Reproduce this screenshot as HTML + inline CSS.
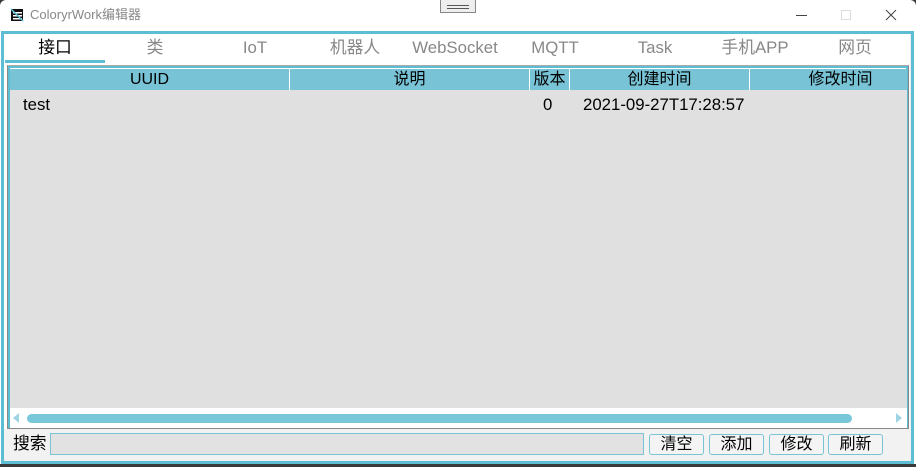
<!DOCTYPE html>
<html><head><meta charset="utf-8"><style>
*{margin:0;padding:0;box-sizing:border-box}
body{width:916px;height:467px;background:#3a3a3a;position:relative;overflow:hidden;font-family:"Liberation Sans","Noto Sans CJK SC",sans-serif}
.a{position:absolute}
.win{left:0;top:0;width:916px;height:464px;background:#fff;border-radius:6px 6px 0 0}
.title{left:30px;top:7px;font-size:13px;line-height:16px;color:#888}
.tab{top:38px;font-size:16.8px;line-height:20px;height:20px;color:#888;text-align:center;width:100px}
.hd{top:69px;height:21px;background:#78c3d6;font-size:16px;text-align:center;line-height:21px;color:#000;border-right:1px solid #fff}
.cell{top:95px;font-size:16.8px;line-height:20px}
.btn{top:434px;height:21px;border:1px solid #78c3d6;border-radius:3px;background:#f4f4f4;font-size:16px;line-height:19px;text-align:center}
</style></head><body>
<div class="a win"></div>
<svg class="a" style="left:10px;top:8px" width="14" height="14"><rect x="1" y="1" width="12" height="12" fill="#111"/><rect x="3" y="4" width="9" height="1.5" fill="#fff"/><rect x="3" y="7" width="9" height="1.5" fill="#fff"/><rect x="3" y="10" width="9" height="1.5" fill="#fff"/><line x1="1" y1="1" x2="13" y2="13" stroke="#5bc0d0" stroke-width="1.5"/></svg>
<div class="a title">ColoryrWork编辑器</div>
<div class="a" style="left:440px;top:0;width:36px;height:13px;border:1px solid #888;border-top:none;background:#eee"></div>
<div class="a" style="left:447px;top:5px;width:22px;height:1px;background:#555"></div>
<div class="a" style="left:447px;top:8px;width:22px;height:1px;background:#555"></div>
<div class="a" style="left:796px;top:15px;width:11px;height:1px;background:#444"></div>
<div class="a" style="left:841px;top:10px;width:10px;height:10px;border:1px solid #ddd"></div>
<svg class="a" style="left:885px;top:9px" width="12" height="12"><path d="M1 1L11 11M11 1L1 11" stroke="#444"/></svg>
<div class="a" style="left:1px;top:31px;width:913px;height:433px;border:3px solid #5dbdd3;background:#f0f0f0"></div>
<div class="a" style="left:4px;top:34px;width:906px;height:29px;background:#fff"></div>
<div class="a" style="left:5px;top:60px;width:100px;height:3px;background:#5dbdd3"></div>
<div class="a tab" style="left:5px;color:#000">接口</div>
<div class="a tab" style="left:105px">类</div>
<div class="a tab" style="left:205px">IoT</div>
<div class="a tab" style="left:305px">机器人</div>
<div class="a tab" style="left:405px">WebSocket</div>
<div class="a tab" style="left:505px">MQTT</div>
<div class="a tab" style="left:605px">Task</div>
<div class="a tab" style="left:705px">手机APP</div>
<div class="a tab" style="left:805px">网页</div>
<div class="a" style="left:4px;top:63px;width:906px;height:397px;background:#fff;border-left:3px solid #fff"></div>
<div class="a" style="left:7px;top:65px;width:902px;height:364px;border:1px solid #888;border-top:1px solid #aaa"></div>
<div class="a" style="left:8px;top:66px;width:900px;height:362px;border:2px solid #5dbdd3;border-bottom:none;background:#fff"></div>
<div class="a" style="left:10px;top:69px;width:897px;height:339px;background:#e0e0e0"></div>
<div class="a hd" style="left:10px;width:280px">UUID</div>
<div class="a hd" style="left:290px;width:240px">说明</div>
<div class="a hd" style="left:530px;width:40px">版本</div>
<div class="a hd" style="left:570px;width:180px">创建时间</div>
<div class="a hd" style="left:750px;width:157px;border-right:none;padding-left:24px">修改时间</div>
<div class="a cell" style="left:23px">test</div>
<div class="a cell" style="left:543px">0</div>
<div class="a cell" style="left:583px">2021-09-27T17:28:57</div>
<div class="a" style="left:10px;top:408px;width:897px;height:20px;background:#fff"></div>
<svg class="a" style="left:11px;top:412px" width="10" height="12"><path d="M8 1L2 6L8 11Z" fill="#9fd5e2"/></svg>
<svg class="a" style="left:894px;top:412px" width="10" height="12"><path d="M2 1L8 6L2 11Z" fill="#9fd5e2"/></svg>
<div class="a" style="left:27px;top:414px;width:825px;height:9px;background:#78c8da;border-radius:5px"></div>
<div class="a" style="left:7px;top:428px;width:902px;height:1px;background:#888"></div>
<div class="a" style="left:4px;top:429px;width:906px;height:31px;background:#f2f2f2"></div>
<div class="a" style="left:13px;top:434px;font-size:16.8px;line-height:20px">搜索</div>
<div class="a" style="left:50px;top:433px;width:594px;height:22px;border:1px solid #78c3d6;background:#e2e2e2"></div>
<div class="a btn" style="left:649px;width:55px">清空</div>
<div class="a btn" style="left:709px;width:55px">添加</div>
<div class="a btn" style="left:769px;width:55px">修改</div>
<div class="a btn" style="left:828px;width:55px">刷新</div>
</body></html>
